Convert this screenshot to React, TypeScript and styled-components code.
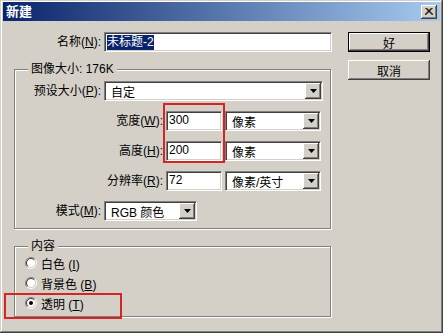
import React from "react";
import styled, { createGlobalStyle } from "styled-components";

const GlobalStyle = createGlobalStyle`
  html, body {
    margin: 0;
    padding: 0;
    background: #d4d0c8;
  }
  body {
    font-family: "Liberation Sans", "Noto Sans CJK SC", sans-serif;
    font-size: 12px;
    color: #000;
  }
`;

const raised = `
  background: #d4d0c8;
  box-shadow: inset -1px -1px #404040, inset 1px 1px #fff,
    inset -2px -2px #808080, inset 2px 2px #d4d0c8;
`;

const sunken = `
  box-sizing: border-box;
  height: 20px;
  background: #fff;
  border: 1px solid;
  border-color: #808080 #fff #fff #808080;
  box-shadow: inset 1px 1px #404040, inset -1px -1px #d4d0c8;
`;

const Window = styled.div`
  position: relative;
  box-sizing: border-box;
  width: 443px;
  height: 333px;
  padding: 2px 3px 3px;
  background: #d4d0c8;
  box-shadow: inset -1px -1px #404040, inset 1px 1px #d4d0c8,
    inset -2px -2px #808080, inset 2px 2px #fff;
  display: flex;
  flex-direction: column;
`;

const TitleBar = styled.div`
  height: 19px;
  display: flex;
  align-items: center;
  justify-content: space-between;
  padding: 0 3px 0 3px;
  background: linear-gradient(to right, #0a246a, #a6caf0);
`;

const Title = styled.span`
  color: #fff;
  font-weight: bold;
  font-size: 13px;
  line-height: 19px;
`;

const CloseButton = styled.div`
  ${raised}
  width: 16px;
  height: 14px;
  display: flex;
  align-items: center;
  justify-content: center;
`;

const Body = styled.div`
  display: flex;
  padding: 11px 0 0 11px;
  gap: 15px;
`;

const MainColumn = styled.div`
  width: 319px;
  display: flex;
  flex-direction: column;
`;

const ButtonColumn = styled.div`
  display: flex;
  flex-direction: column;
  gap: 8px;
`;

const PushButton = styled.div<{ $default?: boolean }>`
  ${raised}
  box-sizing: border-box;
  width: 82px;
  height: 20px;
  display: flex;
  align-items: center;
  justify-content: center;
  font-size: 12px;
  ${(p) => (p.$default ? "border: 1px solid #000;" : "")}
`;

const Row = styled.div<{ $gap?: number }>`
  display: flex;
  align-items: center;
  gap: ${(p) => p.$gap ?? 3}px;
  height: 20px;
`;

const Label = styled.label<{ $w: number }>`
  width: ${(p) => p.$w}px;
  text-align: right;
  white-space: nowrap;
  line-height: 14px;
`;

const Key = styled.span`
  text-decoration: underline;
`;

const TextBox = styled.div<{ $w: number; $top?: boolean }>`
  ${sunken}
  width: ${(p) => p.$w}px;
  display: flex;
  align-items: ${(p) => (p.$top ? "flex-start" : "center")};
  padding: ${(p) => (p.$top ? "1px 2px 0" : "0 2px")};
  line-height: 14px;
  white-space: nowrap;
`;

const Selected = styled.span`
  background: #0a246a;
  color: #fff;
  line-height: 15px;
`;

const Select = styled.div<{ $w: number }>`
  ${sunken}
  width: ${(p) => p.$w}px;
  display: flex;
  align-items: center;
  padding: 1px;
`;

const SelectValue = styled.span`
  flex: 1;
  padding-left: 5px;
  white-space: nowrap;
`;

const DropButton = styled.div`
  ${raised}
  width: 16px;
  height: 16px;
  display: flex;
  align-items: center;
  justify-content: center;
`;

const Group = styled.fieldset<{ $top: number }>`
  box-sizing: border-box;
  width: 317px;
  margin: ${(p) => p.$top}px 0 0 0;
  padding: 0;
  min-width: 0;
  border: 1px solid #808080;
  box-shadow: inset 1px 1px #fff, 1px 1px #fff;
`;

const Legend = styled.legend`
  margin-left: 13px;
  padding: 0 3px;
  line-height: 14px;
  background: #d4d0c8;
`;

const SizeRows = styled.div`
  display: flex;
  flex-direction: column;
  gap: 10px;
  padding: 5px 0 7px 0;
`;

const RadioList = styled.div`
  display: flex;
  flex-direction: column;
  padding: 0 0 3px 10px;
`;

const Mark = styled.div<{ $x: number; $y: number; $w: number; $h: number }>`
  position: absolute;
  left: ${(p) => p.$x}px;
  top: ${(p) => p.$y}px;
  width: ${(p) => p.$w}px;
  height: ${(p) => p.$h}px;
  box-sizing: border-box;
  border: 2px solid #d42424;
  pointer-events: none;
`;

const Arrow = () => (
  <svg width="7" height="4" viewBox="0 0 7 4">
    <polygon points="0,0 7,0 3.5,4" fill="#000" />
  </svg>
);

const CloseIcon = () => (
  <svg width="8" height="7" viewBox="0 0 8 7">
    <path d="M0.5 0 L7.5 7 M1.5 0 L8.5 7 M7.5 0 L0.5 7 M6.5 0 L-0.5 7" stroke="#000" strokeWidth="1" />
  </svg>
);

const RadioIcon = ({ checked }: { checked?: boolean }) => {
  const a = (r: number) => {
    const d = r * Math.SQRT1_2;
    return { x1: 6 - d, y1: 6 + d, x2: 6 + d, y2: 6 - d };
  };
  const o = a(5.5);
  const i = a(4.5);
  return (
    <svg width="12" height="12" viewBox="0 0 12 12">
      <circle cx="6" cy="6" r="4.5" fill="#fff" />
      <path d={`M${o.x1} ${o.y1} A5.5 5.5 0 0 1 ${o.x2} ${o.y2}`} stroke="#808080" fill="none" />
      <path d={`M${o.x2} ${o.y2} A5.5 5.5 0 0 1 ${o.x1} ${o.y1}`} stroke="#fff" fill="none" />
      <path d={`M${i.x1} ${i.y1} A4.5 4.5 0 0 1 ${i.x2} ${i.y2}`} stroke="#404040" fill="none" />
      <path d={`M${i.x2} ${i.y2} A4.5 4.5 0 0 1 ${i.x1} ${i.y1}`} stroke="#d4d0c8" fill="none" />
      {checked && <circle cx="6" cy="6" r="2" fill="#000" />}
    </svg>
  );
};

const Dropdown = ({ w, value }: { w: number; value: string }) => (
  <Select $w={w}>
    <SelectValue>{value}</SelectValue>
    <DropButton>
      <Arrow />
    </DropButton>
  </Select>
);

const Radio = ({ label, k, checked }: { label: string; k: string; checked?: boolean }) => (
  <Row $gap={4}>
    <RadioIcon checked={checked} />
    <span>
      {label} (<Key>{k}</Key>)
    </span>
  </Row>
);

export default function App() {
  return (
    <>
      <GlobalStyle />
      <Window>
        <TitleBar>
          <Title>新建</Title>
          <CloseButton>
            <CloseIcon />
          </CloseButton>
        </TitleBar>
        <Body>
          <MainColumn>
            <Row>
              <Label $w={87}>
                名称(<Key>N</Key>):
              </Label>
              <TextBox $w={228}>
                <Selected>未标题-2</Selected>
              </TextBox>
            </Row>

            <Group $top={10}>
              <Legend>图像大小: 176K</Legend>
              <SizeRows>
                <Row>
                  <Label $w={86}>
                    预设大小(<Key>P</Key>):
                  </Label>
                  <Dropdown w={219} value="自定" />
                </Row>
                <Row>
                  <Label $w={148}>
                    宽度(<Key>W</Key>):
                  </Label>
                  <TextBox $w={56} $top>300</TextBox>
                  <Dropdown w={96} value="像素" />
                </Row>
                <Row>
                  <Label $w={148}>
                    高度(<Key>H</Key>):
                  </Label>
                  <TextBox $w={56} $top>200</TextBox>
                  <Dropdown w={96} value="像素" />
                </Row>
                <Row>
                  <Label $w={148}>
                    分辨率(<Key>R</Key>):
                  </Label>
                  <TextBox $w={56} $top>72</TextBox>
                  <Dropdown w={96} value="像素/英寸" />
                </Row>
                <Row>
                  <Label $w={86}>
                    模式(<Key>M</Key>):
                  </Label>
                  <Dropdown w={93} value="RGB 颜色" />
                </Row>
              </SizeRows>
            </Group>

            <Group $top={10}>
              <Legend>内容</Legend>
              <RadioList>
                <Radio label="白色" k="I" />
                <Radio label="背景色" k="B" />
                <Radio label="透明" k="T" checked />
              </RadioList>
            </Group>
          </MainColumn>

          <ButtonColumn>
            <PushButton $default>好</PushButton>
            <PushButton>取消</PushButton>
          </ButtonColumn>
        </Body>

        <Mark $x={163} $y={103} $w={62} $h={60} />
        <Mark $x={4} $y={293} $w={118} $h={26} />
      </Window>
    </>
  );
}
